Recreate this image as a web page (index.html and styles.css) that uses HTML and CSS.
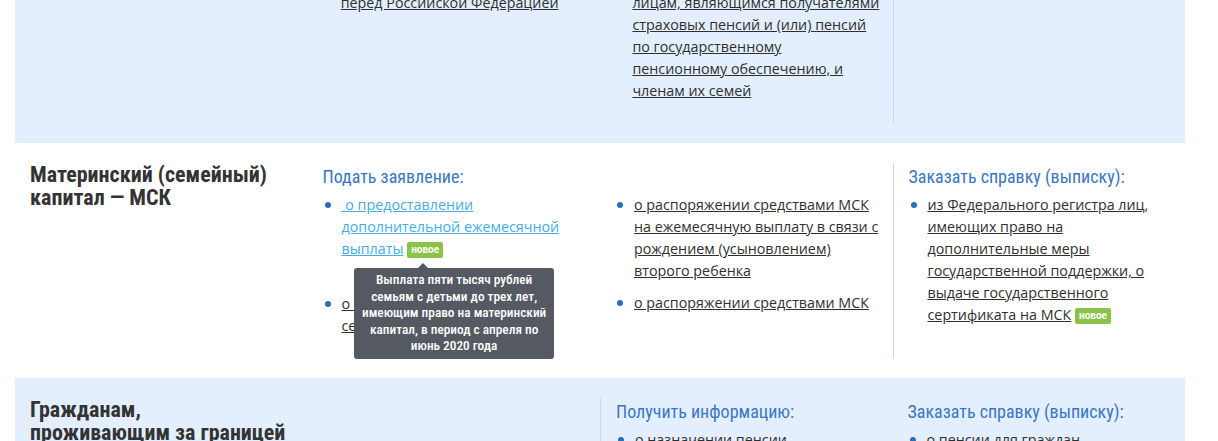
FILE: index.html
```html
<!DOCTYPE html>
<html lang="ru">
<head>
  <meta charset="UTF-8">
  <meta name="viewport" content="width=device-width, initial-scale=1.0">
  <title>Электронные сервисы</title>
  <link rel="stylesheet" href="styles.css">
</head>
<body>
  <div class="page">

    <!-- Пенсионерам -->
    <div class="row alt">
      <div class="col">
        <h3 class="row-title">Пенсионерам</h3>
      </div>
      <div class="col">
        <h4 class="col-title">Получить информацию:</h4>
        <ul class="links">
          <li><a href="#">о задолженности по взносам<br>перед Российской Федерацией</a></li>
        </ul>
      </div>
      <div class="col">
        <h4 class="col-title">Заказать справку (выписку):</h4>
        <ul class="links">
          <li class="fixed"><a href="#">о размере пенсии и иных выплат<br>лицам, являющимся получателями<br>страховых пенсий и (или) пенсий<br>по государственному<br>пенсионному обеспечению, и<br>членам их семей</a></li>
        </ul>
      </div>
      <div class="col sep"></div>
    </div>

    <!-- МСК -->
    <div class="row">
      <div class="col">
        <h3 class="row-title">Материнский (семейный) капитал — МСК</h3>
      </div>
      <div class="col">
        <h4 class="col-title">Подать заявление:</h4>
        <ul class="links">
          <li class="first">
            <a href="#" class="visited">&nbsp;о предоставлении дополнительной ежемесячной выплаты</a>
            <span class="badge">новое
              <span class="tip">Выплата пяти тысяч рублей семьям с детьми до трех лет, имеющим право на материнский капитал, в период с апреля по июнь 2020 года</span>
            </span>
          </li>
          <li><a href="#">о выдаче государственного сертификата на МСК</a></li>
        </ul>
      </div>
      <div class="col">
        <h4 class="col-title">&nbsp;</h4>
        <ul class="links">
          <li><a href="#">о распоряжении средствами МСК на ежемесячную выплату в связи с рождением (усыновлением) второго ребенка</a></li>
          <li><a href="#">о распоряжении средствами МСК</a></li>
        </ul>
      </div>
      <div class="col sep">
        <h4 class="col-title">Заказать справку (выписку):</h4>
        <ul class="links">
          <li><a href="#">из Федерального регистра лиц, имеющих право на дополнительные меры государственной поддержки, о выдаче государственного сертификата на МСК</a> <span class="badge">новое</span></li>
        </ul>
      </div>
    </div>

    <!-- За границей -->
    <div class="row alt">
      <div class="col">
        <h3 class="row-title">Гражданам, <br>проживающим за границей</h3>
      </div>
      <div class="col"></div>
      <div class="col sep">
        <h4 class="col-title">Получить информацию:</h4>
        <ul class="links">
          <li><a href="#">о назначении пенсии</a></li>
        </ul>
      </div>
      <div class="col">
        <h4 class="col-title">Заказать справку (выписку):</h4>
        <ul class="links">
          <li><a href="#">о пенсии для граждан, проживающих за пределами РФ</a></li>
        </ul>
      </div>
    </div>

  </div>
</body>
</html>
```

FILE: styles.css
```css
* { margin: 0; padding: 0; box-sizing: border-box; }
body { background: #fff; color: #333; font-family: "Open Sans", "Noto Sans", sans-serif; }

.page {
  margin-top: -81px;
  padding: 0 33px 0 15px;
}

.row {
  display: grid;
  grid-template-columns: repeat(4, 1fr);
  padding: 20px 0;
}
.row.alt { background: #e3efff; }

.col { padding: 0 14px 0 15px; }
.col.sep { border-left: 1px solid #c7daee; }

.row-title {
  font-family: Roboto, sans-serif;
  font-stretch: condensed;
  font-size: 22px;
  line-height: 23px;
  font-weight: 700;
  color: #333;
}

.col-title {
  font-family: Roboto, sans-serif;
  font-stretch: condensed;
  font-size: 18px;
  line-height: 22px;
  font-weight: 400;
  color: #3a77c2;
  margin: 3px 0 6px;
}

.links {
  list-style: none;
  margin-bottom: 21px;
}
.links li {
  position: relative;
  padding-left: 19px;
  margin-bottom: 10px;
  font-size: 14.3px;
  line-height: 22px;
}
.links li:last-child { margin-bottom: 0; }
.links li.first { margin-bottom: 33px; }
.links li.fixed { white-space: nowrap; }
.links li::before {
  content: "";
  position: absolute;
  left: 2px;
  top: 8px;
  width: 6px;
  height: 6px;
  border-radius: 50%;
  background: #2a6cc0;
}
.links a { color: #2f2f2f; }
.links a.visited { color: #45ade2; }

.badge {
  position: relative;
  display: inline-block;
  background: #8bc34a;
  color: #fff;
  font-family: Roboto, sans-serif;
  font-size: 10px;
  font-weight: 700;
  line-height: 16px;
  padding: 0 4px;
  border-radius: 2px;
  vertical-align: 1px;
}

.tip {
  position: absolute;
  top: calc(100% + 10px);
  left: -53px;
  width: 200px;
  padding: 4px 7px;
  background: #555a62;
  color: #fff;
  border-radius: 3px;
  font-family: Roboto, sans-serif;
  font-stretch: condensed;
  font-size: 13.3px;
  font-weight: 500;
  line-height: 16.5px;
  text-align: center;
  white-space: normal;
  z-index: 5;
}
.tip::before {
  content: "";
  position: absolute;
  top: -5px;
  left: 64px;
  border: 5px solid transparent;
  border-top: 0;
  border-bottom-color: #555a62;
}
```
